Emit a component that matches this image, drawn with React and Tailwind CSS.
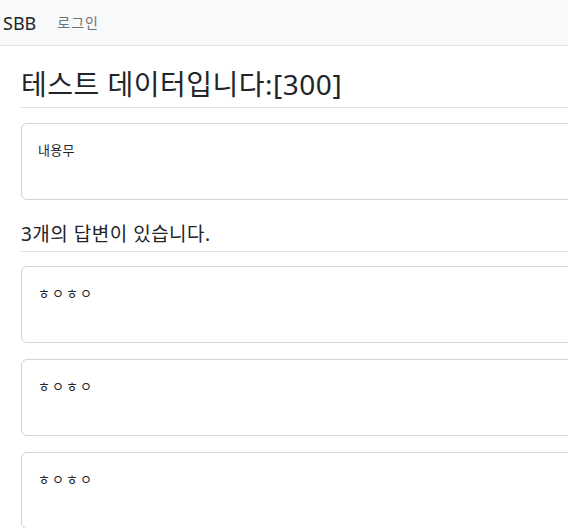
const font = { fontFamily: '"Noto Sans", "Noto Sans CJK KR", sans-serif' };

const answers = ["ㅎㅇㅎㅇ", "ㅎㅇㅎㅇ", "ㅎㅇㅎㅇ"];

function NavBar() {
  return (
    <nav className="h-[46px] w-full bg-[#f8f9fa] border-b border-[#dee2e6] flex items-center">
      <a href="#" className="ml-[3px] text-[18px] leading-none text-[#212529]">SBB</a>
      <a href="#" className="ml-[21px] text-[14px] tracking-[1px] leading-none text-[#6f7173]">로그인</a>
    </nav>
  );
}

function Card({ children, wide }) {
  return (
    <div className="rounded-[6px] border border-[#d3d3d3] bg-white px-4 py-4">
      <div
        className={`h-[43px] text-[13px] leading-[21px] text-[#212529] whitespace-pre-line ${
          wide ? "tracking-[2px]" : "tracking-[0.3px]"
        }`}
      >
        {children}
      </div>
    </div>
  );
}

export default function App() {
  return (
    <div className="w-[568px] h-[528px] overflow-hidden bg-white" style={font}>
      <NavBar />
      <main className="pl-[21px] w-[1100px]">
        {/* Question */}
        <h2 className="mt-4 pt-[4px] pb-[5px] border-b border-[#dee2e6] text-[28px] tracking-[0.5px] leading-[36px] text-[#212529]">
          테스트 데이터입니다:[300]
        </h2>
        <div className="mt-[15px]">
          <Card>내용무</Card>
        </div>

        {/* Answers */}
        <h5 className="mt-4 pt-[6px] pb-[5px] border-b border-[#dee2e6] text-[19px] tracking-[0.5px] leading-[24px] text-[#212529]">
          3개의 답변이 있습니다.
        </h5>
        <div className="mt-[14px] flex flex-col gap-4">
          {answers.map((a, i) => (
            <Card key={i} wide>
              {a}
            </Card>
          ))}
        </div>
      </main>
    </div>
  );
}
